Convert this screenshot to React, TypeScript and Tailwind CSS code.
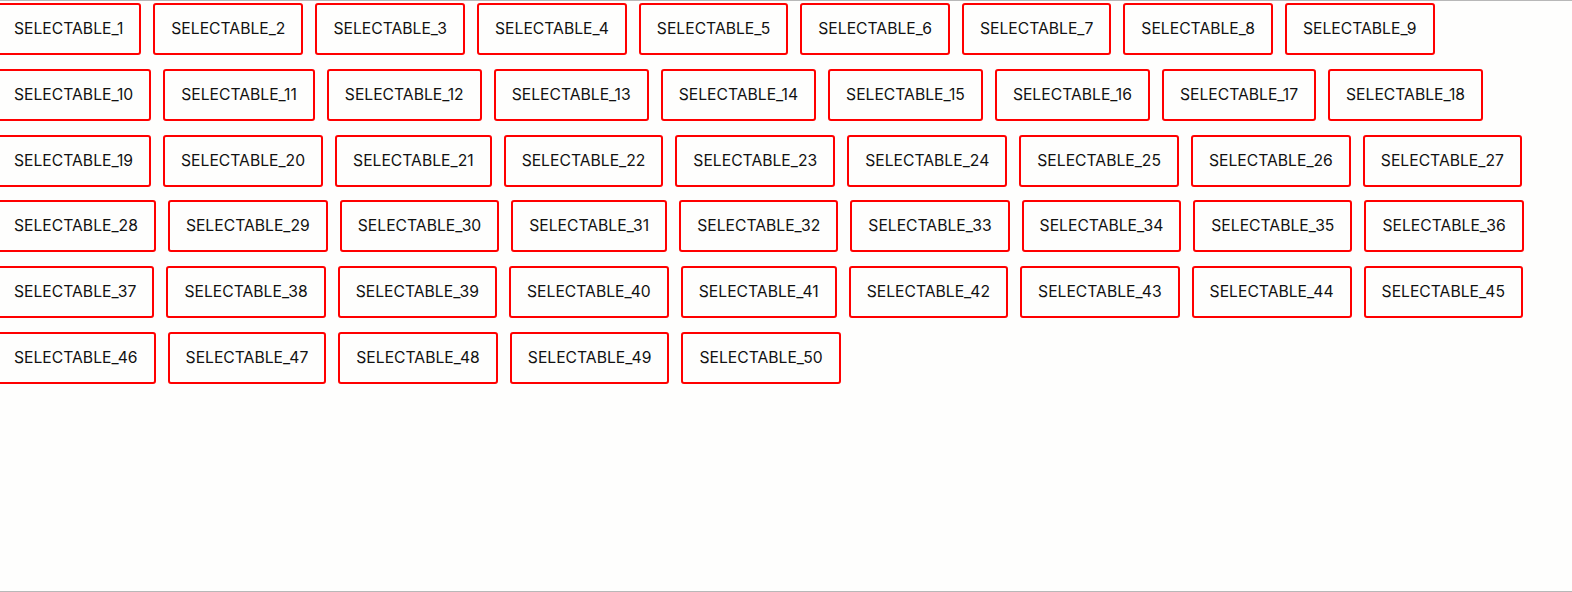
const items = Array.from({ length: 50 }, (_, i) => `SELECTABLE_${i + 1}`);

export default function App() {
  return (
    <div className="h-[592px] w-full overflow-hidden bg-[#fefefd] border-t border-b border-[#b8b8b8] font-['Inter',sans-serif]">
      <div className="flex flex-wrap gap-x-3 gap-y-[13.8px] -ml-1 pt-[2px] pr-[40px]">
        {items.map((label) => (
          <div
            key={label}
            className="border-2 border-[#ff0000] rounded-[3px] px-4 py-[14px] text-[15.7px] leading-5 text-[#111]"
          >
            {label}
          </div>
        ))}
      </div>
    </div>
  );
}
